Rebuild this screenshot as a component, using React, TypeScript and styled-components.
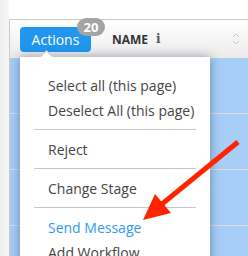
import React from 'react'
import styled, { createGlobalStyle } from 'styled-components'

const GlobalStyle = createGlobalStyle`
  body {
    margin: 0;
    background: #fff;
    font-family: 'Open Sans', 'Liberation Sans', sans-serif;
  }
`;

const Page = styled.div`
  position: relative;
  width: 248px;
  height: 256px;
  overflow: hidden;
  background: linear-gradient(to right, #efefef, #f7f7f7 9px, #fff 9px);
`;

const Panel = styled.div`
  margin: 19px 0 0 9px;
  border-top: 1px solid #cacaca;
  border-left: 1px solid #cacaca;
  background: #fff;
`;

const Header = styled.div`
  display: flex;
  align-items: center;
  height: 38px;
  padding: 0 8px 0 10px;
  background: linear-gradient(#ffffff, #ebebeb);
`;

const ActionsButton = styled.button`
  position: relative;
  width: 71px;
  height: 25px;
  padding: 0;
  border: none;
  border-radius: 4px;
  background: #2196ee;
  color: #fff;
  font-family: 'Open Sans', sans-serif;
  font-size: 14px;
  cursor: pointer;
`;

const Badge = styled.span`
  position: absolute;
  left: 57px;
  top: -9px;
  width: 28px;
  height: 18px;
  border-radius: 9px;
  background: #a3a3a3;
  color: #fff;
  font-size: 13px;
  font-weight: 700;
  line-height: 18px;
  text-align: center;
`;

const ColTitle = styled.span`
  margin-left: 21px;
  font-size: 12px;
  font-weight: 700;
  color: #333;
`;

const InfoMark = styled.span`
  margin-left: 8px;
  font-family: 'DejaVu Serif', serif;
  font-size: 12px;
  font-weight: 700;
  color: #555;
`;

const SortIcon = styled.svg`
  margin-left: auto;
`;

const Row = styled.div`
  height: 55px;
  border-bottom: 1px solid #dcdcdc;
  background: #a7cef6;
`;

const Menu = styled.div`
  position: absolute;
  left: 20px;
  top: 57px;
  width: 190px;
  bottom: -30px;
  padding: 16px 0;
  background: #fff;
  box-shadow: 0 0 10px rgba(10, 30, 70, 0.4);
`;

const Caret = styled.div`
  position: absolute;
  left: 22px;
  top: -5px;
  width: 8px;
  height: 8px;
  background: #fff;
  border-top: 1px solid #c4c4c4;
  border-left: 1px solid #c4c4c4;
  transform: rotate(45deg);
`;

const Item = styled.div<{ $active?: boolean }>`
  padding: 0 28px;
  line-height: 25px;
  font-size: 14px;
  white-space: nowrap;
  color: ${p => (p.$active ? '#2d9cf0' : '#444')};
`;

const Divider = styled.div`
  height: 1px;
  margin: 6px 14px 7px;
  background: #c4c8ce;
`;

const Arrow = styled.svg`
  position: absolute;
  left: 0;
  top: 0;
  pointer-events: none;
`;

const App = () => {
  return (
    <Page>
      <GlobalStyle />
      <Panel>
        <Header>
          <ActionsButton>
            Actions
            <Badge>20</Badge>
          </ActionsButton>
          <ColTitle>NAME</ColTitle>
          <InfoMark>i</InfoMark>
          <SortIcon width="8" height="14" viewBox="0 0 8 14">
            <polyline points="1,5 4,2 7,5" fill="none" stroke="#c8c8c8" strokeWidth="1" />
            <polyline points="1,9 4,12 7,9" fill="none" stroke="#c8c8c8" strokeWidth="1" />
          </SortIcon>
        </Header>
        <Row />
        <Row />
        <Row />
        <Row />
      </Panel>
      <Menu>
        <Caret />
        <Item>Select all (this page)</Item>
        <Item>Deselect All (this page)</Item>
        <Divider />
        <Item>Reject</Item>
        <Divider />
        <Item>Change Stage</Item>
        <Divider />
        <Item $active>Send Message</Item>
        <Item>Add Workflow</Item>
      </Menu>
      <Arrow width="248" height="256" viewBox="0 0 248 256">
        <line x1="238" y1="142" x2="162" y2="204" stroke="#ff2400" strokeWidth="5" />
        <polygon points="143,220 155,194 171,213" fill="#ff2400" />
      </Arrow>
    </Page>
  )
}

export default App
